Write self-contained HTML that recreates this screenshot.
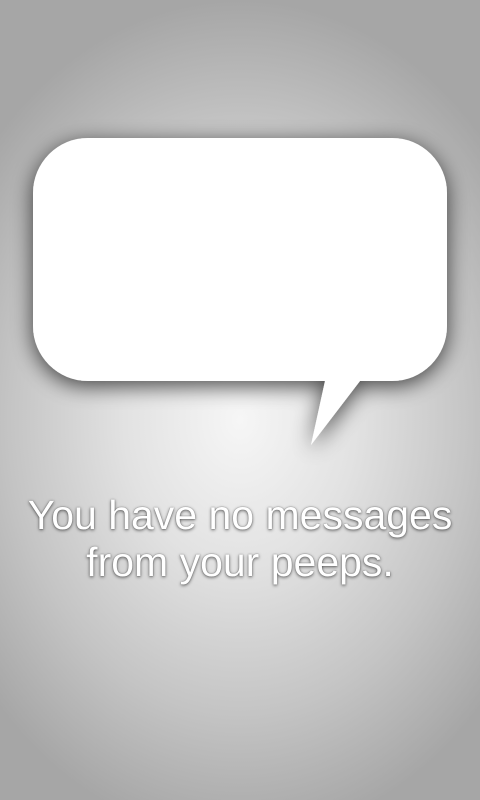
<!DOCTYPE html>
<html><head><style>
html,body{margin:0;padding:0;}
body{width:480px;height:800px;overflow:hidden;position:relative;
background:radial-gradient(ellipse 330px 420px at 240px 420px,#f6f6f6 0%,#e2e2e2 35%,#c4c4c4 70%,#a6a6a6 100%);
font-family:"Liberation Sans",sans-serif;}
svg{position:absolute;left:0;top:0;}
.t{position:absolute;left:0;width:480px;top:492px;text-align:center;color:#fff;font-size:41px;line-height:47px;
text-shadow:0 1px 3px rgba(0,0,0,0.6),0 0 1px rgba(0,0,0,0.5);}
</style></head><body>
<svg width="480" height="800">
<defs><filter id="s" x="-20%" y="-20%" width="140%" height="150%"><feGaussianBlur in="SourceAlpha" stdDeviation="11"/><feOffset dy="5"/><feComponentTransfer><feFuncA type="linear" slope="0.7"/></feComponentTransfer><feMerge><feMergeNode/><feMergeNode in="SourceGraphic"/></feMerge></filter></defs>
<g filter="url(#s)">
<path d="M88 138 H392 A55 55 0 0 1 447 193 V326 A55 55 0 0 1 392 381 H360 L311 445 L325 381 H88 A55 55 0 0 1 33 326 V193 A55 55 0 0 1 88 138 Z" fill="#fff"/>
</g>
</svg>
<div class="t">You have no messages<br>from your peeps.</div>
</body></html>
